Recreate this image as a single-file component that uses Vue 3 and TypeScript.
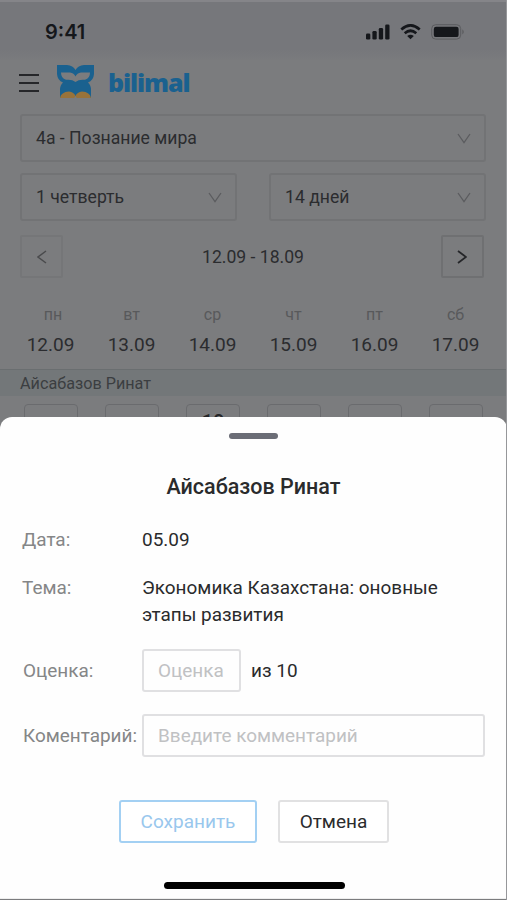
<script setup lang="ts">
interface Day {
  name: string
  date: string
  grade: string
  muted?: boolean
}

const days: Day[] = [
  { name: 'пн', date: '12.09', grade: '10', muted: true },
  { name: 'вт', date: '13.09', grade: '' },
  { name: 'ср', date: '14.09', grade: '10' },
  { name: 'чт', date: '15.09', grade: '' },
  { name: 'пт', date: '16.09', grade: '' },
  { name: 'сб', date: '17.09', grade: '' },
]
</script>

<template>
  <div class="screen">
    <div class="status">
      <span class="time">9:41</span>
      <div class="indicators">
        <svg class="signal" width="24" height="16" viewBox="0 0 24 16">
          <rect x="0" y="9.5" width="4.3" height="6" rx="1.3" />
          <rect x="6.4" y="7" width="4.3" height="8.5" rx="1.3" />
          <rect x="12.8" y="4" width="4.3" height="11.5" rx="1.3" />
          <rect x="19.2" y="0.5" width="4.3" height="15" rx="1.3" />
        </svg>
        <svg class="wifi" width="21" height="16" viewBox="0 0 21 16">
          <path d="M1.3 5.5Q10.5-2.7 19.7 5.5" />
          <path d="M4.7 9.2Q10.5 4.3 16.3 9.2" />
          <path class="dot" d="M7.2 12Q10.5 9.6 13.8 12L10.5 15.3Z" />
        </svg>
        <svg width="34" height="16" viewBox="0 0 34 16">
          <rect x=".7" y=".7" width="29" height="14.4" rx="4" fill="none" stroke="#5b5c5f" />
          <rect x="2.8" y="2.7" width="24.8" height="10.4" rx="2.2" fill="#15171b" />
          <path d="M31.3 5.2v5.4q3-2.7 0-5.4" fill="#5b5c5f" />
        </svg>
      </div>
    </div>

    <header class="header">
      <svg class="menu" width="20" height="20" viewBox="0 0 20 20"><path d="M0 2h20M0 10h20M0 18h20" /></svg>
      <svg class="logo" width="38" height="34" viewBox="0 0 38 34">
        <path fill="#1a618f" d="M0 0H10Q16 .5 18.5 5Q21 .5 27 0H37V9Q36.5 15.5 31 17.5Q34 20 34 25V33H3V25Q3 20 6 17.5Q.5 15.5 0 9Z" />
        <path fill="#7b7c7e" d="M4 7.5H13Q17 8 18.5 11.5Q20 8 24 7.5H33Q33 13.5 28 14.8Q22 14 18.5 17Q15 14 9 14.8Q4 13.5 4 7.5Z" />
        <path fill="#98733b" d="M3 33Q4 27 12 26.5Q17 27 18.5 31Q20 27 25 26.5Q33 27 34 33Z" />
        <path fill="#7b7c7e" d="M15 33.5Q18 33 18.5 31Q19 33 22 33.5Z" />
      </svg>
      <span class="brand">bilimal</span>
    </header>

    <main class="journal">
      <div class="select wide"><span>4а - Познание мира</span><svg class="chevron" viewBox="0 0 14 11"><path d="M1 1l6 8.5L13 1" /></svg></div>
      <div class="filters">
        <div class="select"><span>1 четверть</span><svg class="chevron" viewBox="0 0 14 11"><path d="M1 1l6 8.5L13 1" /></svg></div>
        <div class="select"><span>14 дней</span><svg class="chevron" viewBox="0 0 14 11"><path d="M1 1l6 8.5L13 1" /></svg></div>
      </div>
      <div class="period">
        <div class="step prev"><svg width="10" height="14" viewBox="0 0 10 14"><path d="M9 1L1 7l8 6" /></svg></div>
        <span class="range">12.09 - 18.09</span>
        <div class="step next"><svg width="10" height="14" viewBox="0 0 10 14"><path d="M1 1l8 6-8 6" /></svg></div>
      </div>
      <div class="days">
        <div v-for="d in days" :key="d.date" class="day">
          <span class="weekday">{{ d.name }}</span>
          <span class="date">{{ d.date }}</span>
        </div>
      </div>
    </main>
    <div class="student">Айсабазов Ринат</div>
    <div class="grades">
      <div v-for="d in days" :key="d.date" class="grade" :class="{ muted: d.muted }">{{ d.grade }}</div>
    </div>

    <section class="sheet">
      <div class="handle"></div>
      <h2>Айсабазов Ринат</h2>
      <div class="row date-row"><span class="label">Дата:</span><span>05.09</span></div>
      <div class="row topic-row"><span class="label">Тема:</span><span class="topic">Экономика Казахстана: оновные<br />этапы развития</span></div>
      <div class="row score-row"><span class="label inset">Оценка:</span><div class="input score">Оценка</div><span class="of">из 10</span></div>
      <div class="row comment-row"><span class="label inset">Коментарий:</span><div class="input comment">Введите комментарий</div></div>
      <div class="actions">
        <button class="save">Сохранить</button>
        <button class="cancel">Отмена</button>
      </div>
      <div class="home"></div>
    </section>
  </div>
</template>

<style>
body {
  background: #7b7c7e;
}
</style>

<style scoped>
* {
  box-sizing: border-box;
}
.screen {
  width: 507px;
  height: 900px;
  overflow: hidden;
  display: flex;
  flex-direction: column;
  background: #7b7c7e;
  border-right: 1px solid #96979a;
  font-family: Roboto, "Liberation Sans", sans-serif;
  font-size: 17.6px;
  color: #2b2c2f;
}
svg {
  display: block;
  flex: none;
}
.status {
  flex: none;
  height: 60px;
  border-top: 2px solid #858589;
  background: linear-gradient(#76777b 0 48px, #7b7c7e 60px);
  display: flex;
  justify-content: space-between;
  padding: 18px 41px 0 45px;
}
.time {
  font: 600 20px/24px Inter, sans-serif;
  color: #15171b;
}
.indicators {
  display: flex;
  gap: 10px;
  padding-top: 4px;
}
.signal {
  fill: #15171b;
}
.wifi {
  fill: none;
  stroke: #15171b;
  stroke-width: 2.7;
}
.wifi .dot {
  fill: #15171b;
  stroke: none;
}
.header {
  flex: none;
  height: 54px;
  display: flex;
  align-items: flex-start;
  padding: 5px 19px 0;
}
.menu {
  margin-top: 8px;
  stroke: #252629;
  stroke-width: 1.8;
}
.logo {
  margin-left: 18px;
}
.brand {
  margin-left: 13px;
  font: 800 25px/34px "Open Sans", sans-serif;
  letter-spacing: -1.1px;
  color: #1a618f;
}
.journal {
  flex: none;
  height: 255px;
  padding: 0 20px;
}
.select {
  height: 48px;
  border: 2px solid #727375;
  border-radius: 3px;
  padding: 0 13px 0 14px;
  display: flex;
  align-items: center;
  justify-content: space-between;
}
.select span {
  line-height: 24px;
}
.chevron {
  width: 14px;
  height: 11px;
  fill: none;
  stroke: #5b5c5f;
  stroke-width: 1.3;
}
.filters {
  display: grid;
  grid-template-columns: 217px 217px;
  justify-content: space-between;
  margin-top: 11px;
}
.period {
  display: flex;
  align-items: center;
  justify-content: space-between;
  margin-top: 14px;
  padding-right: 2px;
}
.range {
  padding-left: 2px;
}
.step {
  width: 43px;
  height: 43px;
  border: 2px solid #6f7072;
  border-radius: 2px;
  display: grid;
  place-items: center;
}
.step svg {
  fill: none;
  stroke: #252629;
  stroke-width: 1.8;
}
.step.prev {
  border-color: #757678;
}
.step.prev svg {
  stroke: #4a4b4d;
  stroke-width: 1.5;
}
.days {
  display: grid;
  grid-template-columns: repeat(6, 81px);
  margin: 24px 0 0 -10px;
}
.day {
  display: flex;
  flex-direction: column;
  align-items: center;
}
.weekday {
  font-size: 16px;
  line-height: 25px;
  height: 24px;
  color: #58595b;
}
.day:first-child .weekday {
  padding-left: 5px;
}
.date {
  font-size: 19px;
  line-height: 26px;
  margin-top: 6px;
}
.student {
  flex: none;
  height: 27px;
  padding-left: 20px;
  border-top: 1px solid #6a6e70;
  background: #737779;
  font-size: 16.2px;
  line-height: 27px;
  color: #3b3e41;
}
.grades {
  flex: none;
  height: 21px;
  padding: 8px 0 0 24px;
  display: flex;
  gap: 27px;
}
.grade {
  flex: none;
  width: 54px;
  height: 40px;
  border: 1px solid #6a6b6e;
  border-radius: 4px;
  text-align: center;
  font: 500 20px/34px Roboto, sans-serif;
  color: #252629;
}
.grade.muted {
  color: #66676a;
  font-size: 18px;
  line-height: 37px;
}
.sheet {
  flex: none;
  width: 507px;
  height: 482px;
  background: #fefefe;
  border-radius: 12px 12px 0 0;
  color: #2a2b2c;
  font-size: 18.95px;
  position: relative;
  border-bottom: 1px solid #eee;
}
.handle {
  width: 49px;
  height: 6px;
  border-radius: 3px;
  background: #6b6d76;
  margin: 16px auto 0 229px;
}
h2 {
  margin: 34px 0 0;
  text-align: center;
  font-size: 21.5px;
  font-weight: 500;
  line-height: 28px;
}
.row {
  display: flex;
  padding-left: 22px;
  line-height: 27px;
}
.label {
  flex: none;
  width: 120px;
  color: #858687;
}
.label.inset {
  padding-left: 1px;
}
.date-row {
  margin-top: 25px;
}
.topic-row {
  margin-top: 21px;
}
.score-row,
.comment-row {
  align-items: center;
}
.score-row {
  margin-top: 21px;
  line-height: 29px;
}
.comment-row {
  margin-top: 22px;
}
.input {
  height: 43px;
  border: 2px solid #e0e0e2;
  border-radius: 3px;
  padding-left: 14px;
  line-height: 40px;
  color: #c0c1c3;
}
.score {
  width: 99px;
}
.of {
  margin-left: 10px;
}
.comment {
  width: 343px;
}
.actions {
  display: flex;
  gap: 21px;
  margin: 43px 0 0 119px;
}
button {
  height: 43px;
  padding: 0;
  border: 2px solid #e1e1e2;
  border-radius: 3px;
  background: #fff;
  font: 19px/40px Roboto, sans-serif;
  color: #2a2b2c;
}
.save {
  width: 138px;
  border-color: #a3d0f3;
  color: #99c7ed;
}
.cancel {
  width: 111px;
}
.home {
  width: 181px;
  height: 7px;
  border-radius: 4px;
  background: #000;
  margin: 39px 0 0 164px;
}
</style>
